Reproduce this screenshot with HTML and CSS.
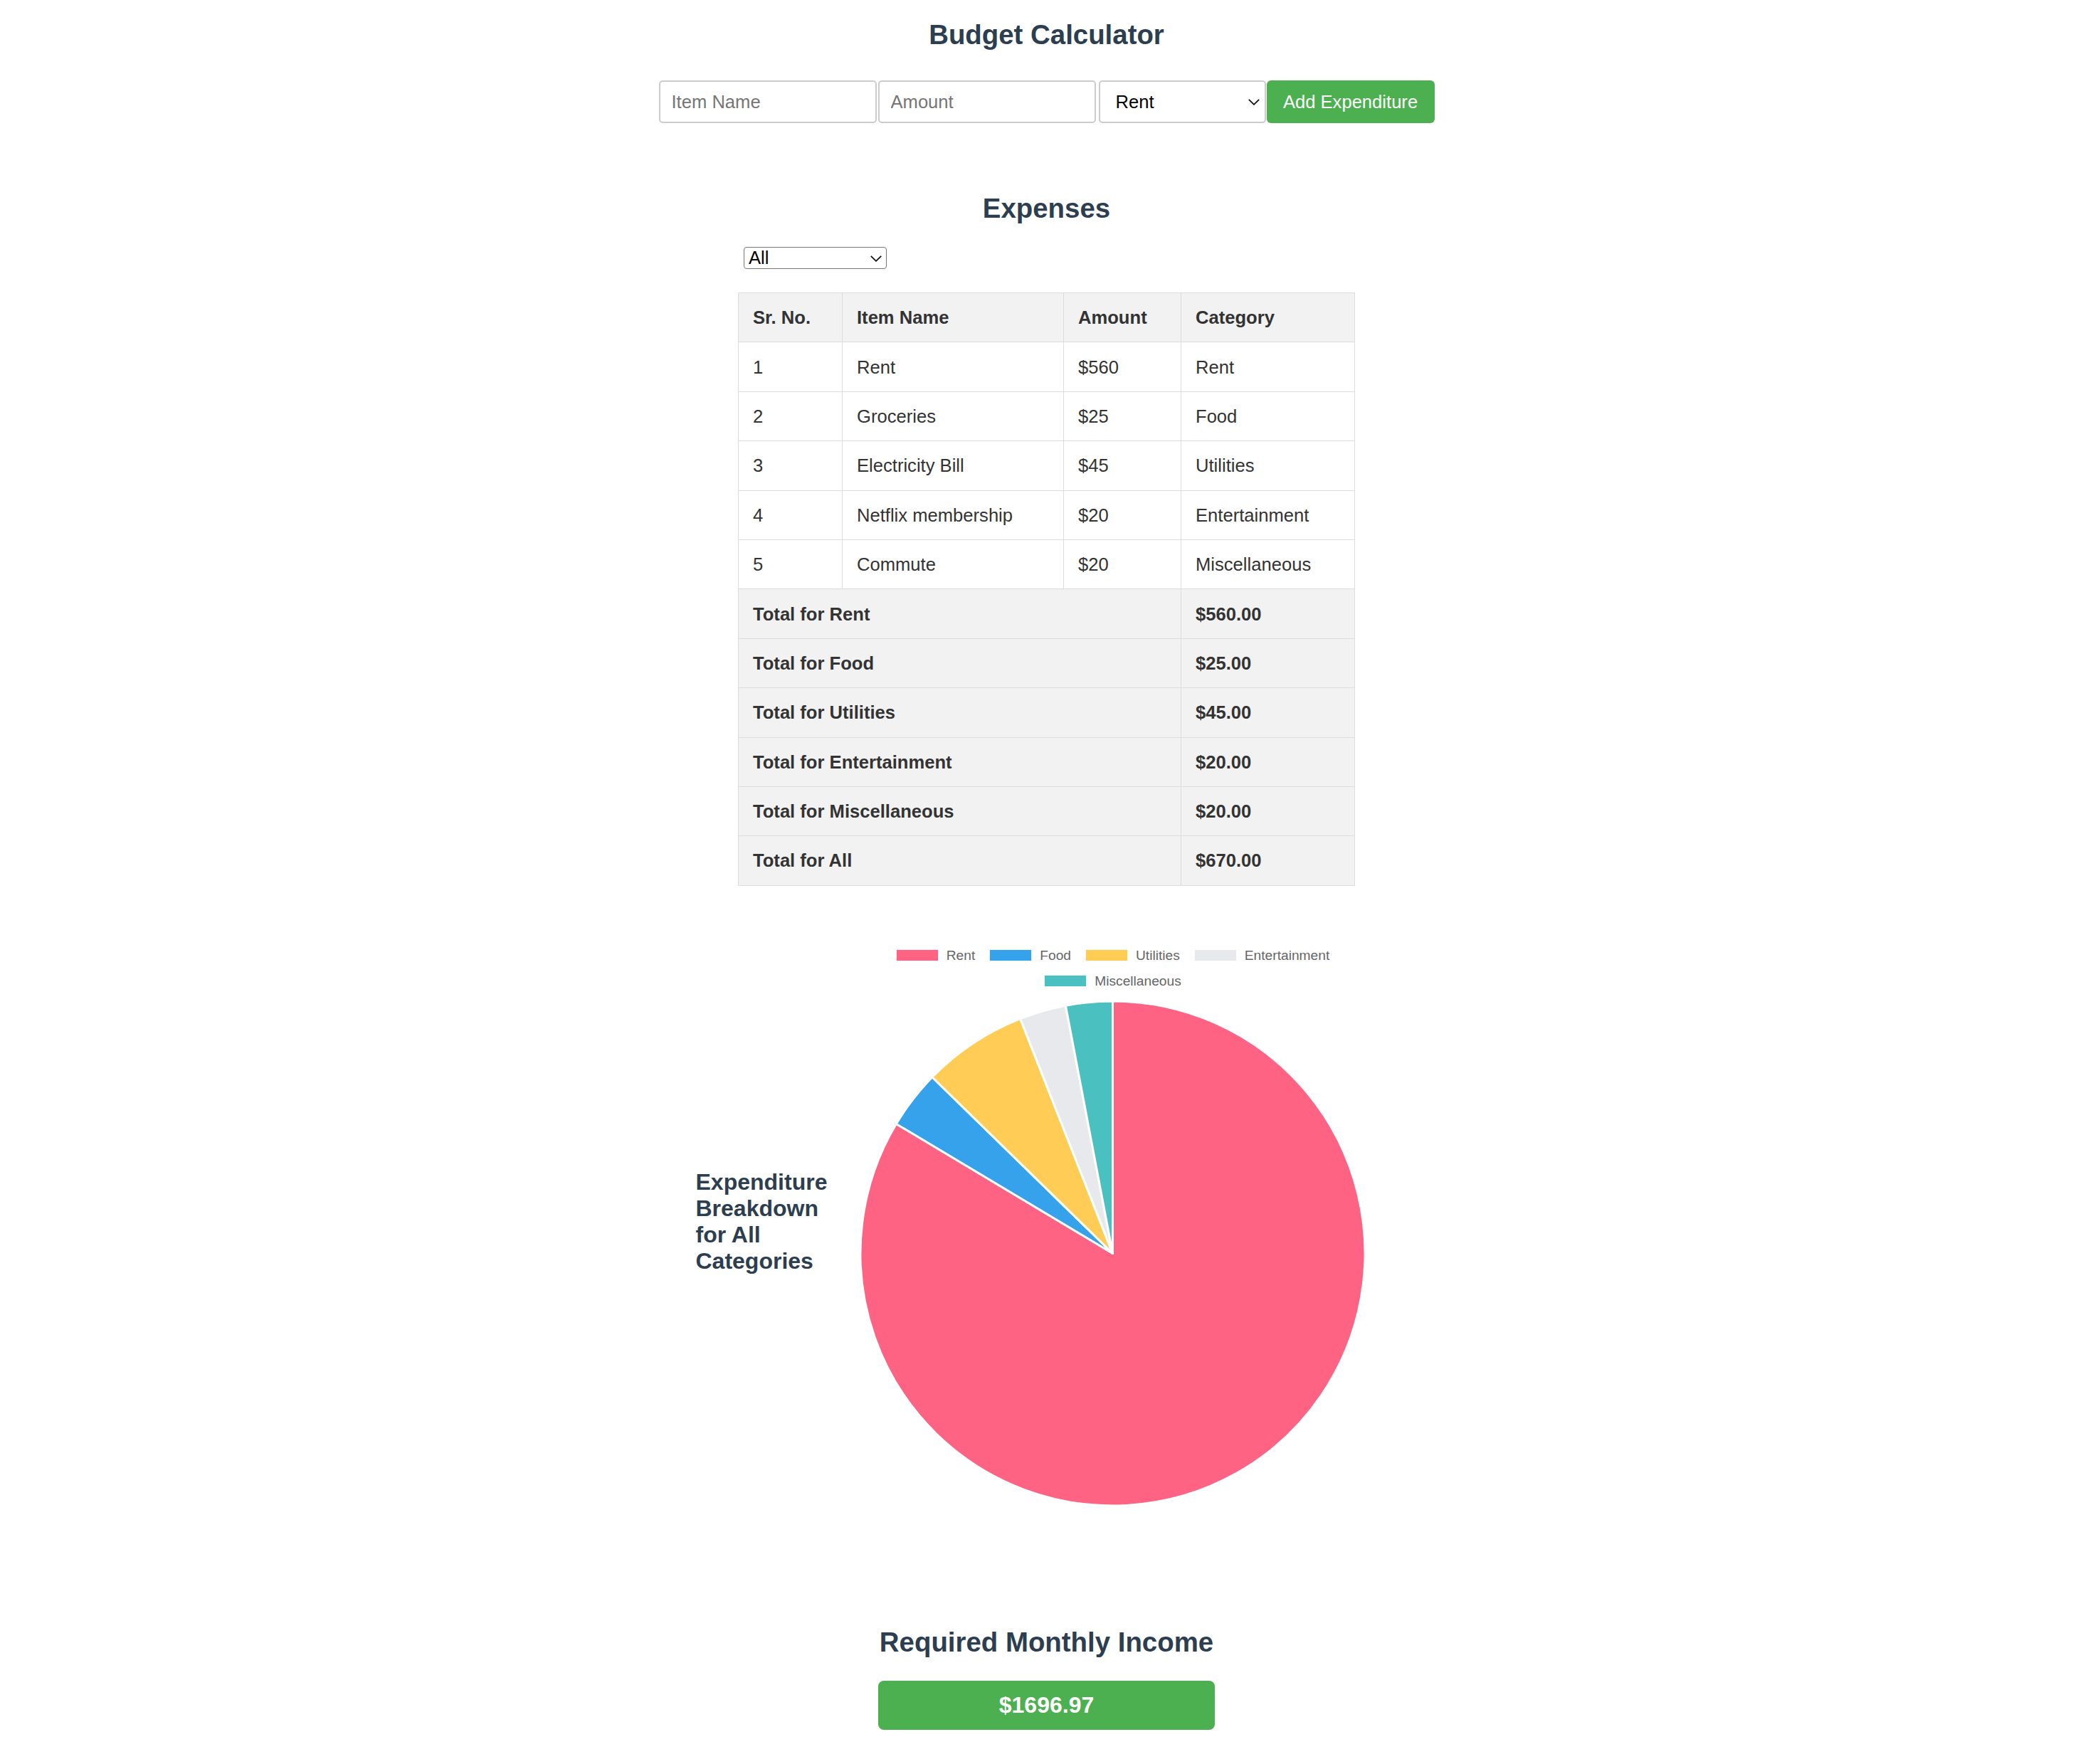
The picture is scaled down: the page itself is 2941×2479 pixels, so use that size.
FILE: index.html
```html
<!DOCTYPE html>
<html lang="en">
<head>
<meta charset="utf-8">
<title>Budget Calculator</title>
<link rel="stylesheet" href="styles.css">
</head>
<body>
  <h1 class="page-title">Budget Calculator</h1>

  <div class="entry-form">
    <input class="field" type="text" placeholder="Item Name">
    <input class="field" type="text" placeholder="Amount">
    <div class="select-wrap select-wrap--form">
      <select class="form-select">
        <option>Rent</option>
        <option>Food</option>
        <option>Utilities</option>
        <option>Entertainment</option>
        <option>Miscellaneous</option>
      </select>
      <svg class="chev" width="16" height="9" viewBox="0 0 16 9"><polyline points="0.8,0.8 8,7.8 15.2,0.8" fill="none" stroke="#111" stroke-width="1.8"/></svg>
    </div>
    <button class="add-btn" type="button">Add Expenditure</button>
  </div>

  <section class="expenses">
    <h2 class="section-title">Expenses</h2>
    <div class="filter-row">
      <div class="select-wrap select-wrap--filter">
        <select class="filter-select">
          <option>All</option>
          <option>Rent</option>
          <option>Food</option>
          <option>Utilities</option>
          <option>Entertainment</option>
          <option>Miscellaneous</option>
        </select>
        <svg class="chev" width="16" height="9" viewBox="0 0 16 9"><polyline points="0.8,0.8 8,7.8 15.2,0.8" fill="none" stroke="#111" stroke-width="1.8"/></svg>
      </div>
    </div>

    <table class="exp-table">
      <colgroup>
        <col class="c1"><col class="c2"><col class="c3"><col class="c4">
      </colgroup>
      <thead>
        <tr><th>Sr. No.</th><th>Item Name</th><th>Amount</th><th>Category</th></tr>
      </thead>
      <tbody>
        <tr><td>1</td><td>Rent</td><td>$560</td><td>Rent</td></tr>
        <tr><td>2</td><td>Groceries</td><td>$25</td><td>Food</td></tr>
        <tr><td>3</td><td>Electricity Bill</td><td>$45</td><td>Utilities</td></tr>
        <tr><td>4</td><td>Netflix membership</td><td>$20</td><td>Entertainment</td></tr>
        <tr><td>5</td><td>Commute</td><td>$20</td><td>Miscellaneous</td></tr>
        <tr class="total"><td colspan="3">Total for Rent</td><td>$560.00</td></tr>
        <tr class="total"><td colspan="3">Total for Food</td><td>$25.00</td></tr>
        <tr class="total"><td colspan="3">Total for Utilities</td><td>$45.00</td></tr>
        <tr class="total"><td colspan="3">Total for Entertainment</td><td>$20.00</td></tr>
        <tr class="total"><td colspan="3">Total for Miscellaneous</td><td>$20.00</td></tr>
        <tr class="total"><td colspan="3">Total for All</td><td>$670.00</td></tr>
      </tbody>
    </table>
  </section>

  <section class="chart-section">
    <h3 class="chart-title">Expenditure Breakdown for All Categories</h3>
    <div class="chart">
      <ul class="legend">
        <li class="legend-item"><span class="swatch sw-rent"></span>Rent</li>
        <li class="legend-item"><span class="swatch sw-food"></span>Food</li>
        <li class="legend-item"><span class="swatch sw-util"></span>Utilities</li>
        <li class="legend-item"><span class="swatch sw-ent"></span>Entertainment</li>
        <li class="legend-item"><span class="swatch sw-misc"></span>Miscellaneous</li>
      </ul>
      <svg class="pie" width="707" height="707" viewBox="-353.5 -353.5 707 707">
        <g stroke="#ffffff" stroke-width="3" stroke-linejoin="round">
          <path fill="#ff6384" d="M0,0 L0,-354.5 A354.5,354.5 0 1 1 -304.20,-182.03 Z"/>
          <path fill="#36a2eb" d="M0,0 L-304.20,-182.03 A354.5,354.5 0 0 1 -253.59,-247.71 Z"/>
          <path fill="#ffcd56" d="M0,0 L-253.59,-247.71 A354.5,354.5 0 0 1 -129.88,-329.85 Z"/>
          <path fill="#e7e9ed" d="M0,0 L-129.88,-329.85 A354.5,354.5 0 0 1 -66.10,-348.28 Z"/>
          <path fill="#4bc0c0" d="M0,0 L-66.10,-348.28 A354.5,354.5 0 0 1 0,-354.5 Z"/>
        </g>
      </svg>
    </div>
  </section>

  <section class="income">
    <h2 class="section-title">Required Monthly Income</h2>
    <div class="income-box">$1696.97</div>
  </section>
</body>
</html>
```

FILE: styles.css
```css
* {
  box-sizing: border-box;
}

html, body {
  margin: 0;
  padding: 0;
  background: #ffffff;
}

body {
  font-family: "Liberation Sans", Arial, Helvetica, sans-serif;
  color: #333333;
  padding-bottom: 49px;
}

.page-title,
.section-title {
  font-size: 38.4px;
  line-height: 44px;
  font-weight: 700;
  color: #2c3e50;
  text-align: center;
  margin: 0;
}

.page-title {
  padding-top: 27px;
}

/* ---------- entry form ---------- */
.entry-form {
  display: flex;
  justify-content: center;
  align-items: center;
  margin-top: 42px;
}

.field {
  width: 306px;
  height: 60px;
  margin-right: 2px;
  padding: 0 16px;
  border: 2px solid #cccccc;
  border-radius: 5px;
  font-family: inherit;
  font-size: 25.6px;
  color: #222;
  background: #fff;
  outline: none;
}

.field::placeholder {
  color: #767676;
}

.select-wrap {
  position: relative;
  display: inline-block;
}

.select-wrap--form {
  margin-left: 2px;
  margin-right: 1px;
}

.chev {
  position: absolute;
  top: 50%;
  pointer-events: none;
}

.form-select {
  -webkit-appearance: none;
  appearance: none;
  display: block;
  width: 235px;
  height: 60px;
  padding: 0 40px 0 22px;
  border: 2px solid #cccccc;
  border-radius: 5px;
  background: #fff;
  font-family: inherit;
  font-size: 25.6px;
  color: #000;
  outline: none;
}

.select-wrap--form .chev {
  right: 9px;
  margin-top: -4px;
}

.add-btn {
  width: 236px;
  height: 60px;
  padding: 0;
  border: none;
  border-radius: 6px;
  background: #4caf50;
  color: #ffffff;
  font-family: inherit;
  font-size: 25.6px;
  cursor: pointer;
}

/* ---------- expenses ---------- */
.expenses {
  margin-top: 98px;
}

.filter-row {
  width: 867px;
  margin: 32px auto 0;
  padding-left: 8px;
}

.filter-select {
  -webkit-appearance: none;
  appearance: none;
  display: block;
  width: 201px;
  height: 31px;
  padding: 0 30px 0 6px;
  border: 1px solid #767676;
  border-radius: 4px;
  background: #fff;
  font-family: inherit;
  font-size: 25.6px;
  line-height: 29px;
  color: #000;
  outline: none;
}

.select-wrap--filter .chev {
  right: 7px;
  margin-top: -4px;
}

.exp-table {
  width: 866px;
  margin: 33px auto 0;
  border-collapse: collapse;
  table-layout: fixed;
  font-size: 25.6px;
  color: #333333;
}

.c1 { width: 146px; }
.c2 { width: 311px; }
.c3 { width: 165px; }
.c4 { width: 244px; }

.exp-table th,
.exp-table td {
  height: 69.4px;
  padding: 1px 20px 0;
  border: 1px solid #dddddd;
  text-align: left;
  vertical-align: middle;
  white-space: nowrap;
}

.exp-table th {
  background: #f2f2f2;
  font-weight: 700;
}

.exp-table .total td {
  background: #f2f2f2;
  font-weight: 700;
}

/* ---------- chart ---------- */
.chart-section {
  display: flex;
  align-items: center;
  width: 980px;
  margin: 74px auto 0;
}

.chart-title {
  flex: 0 0 186px;
  width: 186px;
  margin: 0 3px 0 -3px;
  font-size: 32px;
  line-height: 37px;
  font-weight: 700;
  color: #2c3e50;
}

.chart {
  flex: 0 0 794px;
  width: 794px;
  padding-top: 6px;
  display: flex;
  flex-direction: column;
  align-items: center;
}

.legend {
  list-style: none;
  margin: 0;
  padding: 0;
  width: 660px;
  display: flex;
  flex-wrap: wrap;
  justify-content: center;
  column-gap: 20px;
}

.legend-item {
  height: 36px;
  display: flex;
  align-items: center;
  font-size: 19.2px;
  color: #666666;
}

.swatch {
  display: inline-block;
  width: 60px;
  height: 17px;
  margin-right: 11px;
  border: 1.5px solid rgba(255, 255, 255, 0.9);
}

.sw-rent { background: #ff6384; }
.sw-food { background: #36a2eb; }
.sw-util { background: #ffcd56; }
.sw-ent  { background: #e7e9ed; }
.sw-misc { background: #4bc0c0; }

.pie {
  display: block;
  margin-top: 11px;
  overflow: visible;
}

/* ---------- income ---------- */
.income {
  width: fit-content;
  margin: 171px auto 0;
}

.income .section-title {
  margin-bottom: 32px;
}

.income-box {
  margin: 0 -2px;
  padding: 16px;
  border-radius: 8px;
  background: #4caf50;
  color: #ffffff;
  font-size: 32px;
  line-height: 37px;
  font-weight: 700;
  text-align: center;
}
```
